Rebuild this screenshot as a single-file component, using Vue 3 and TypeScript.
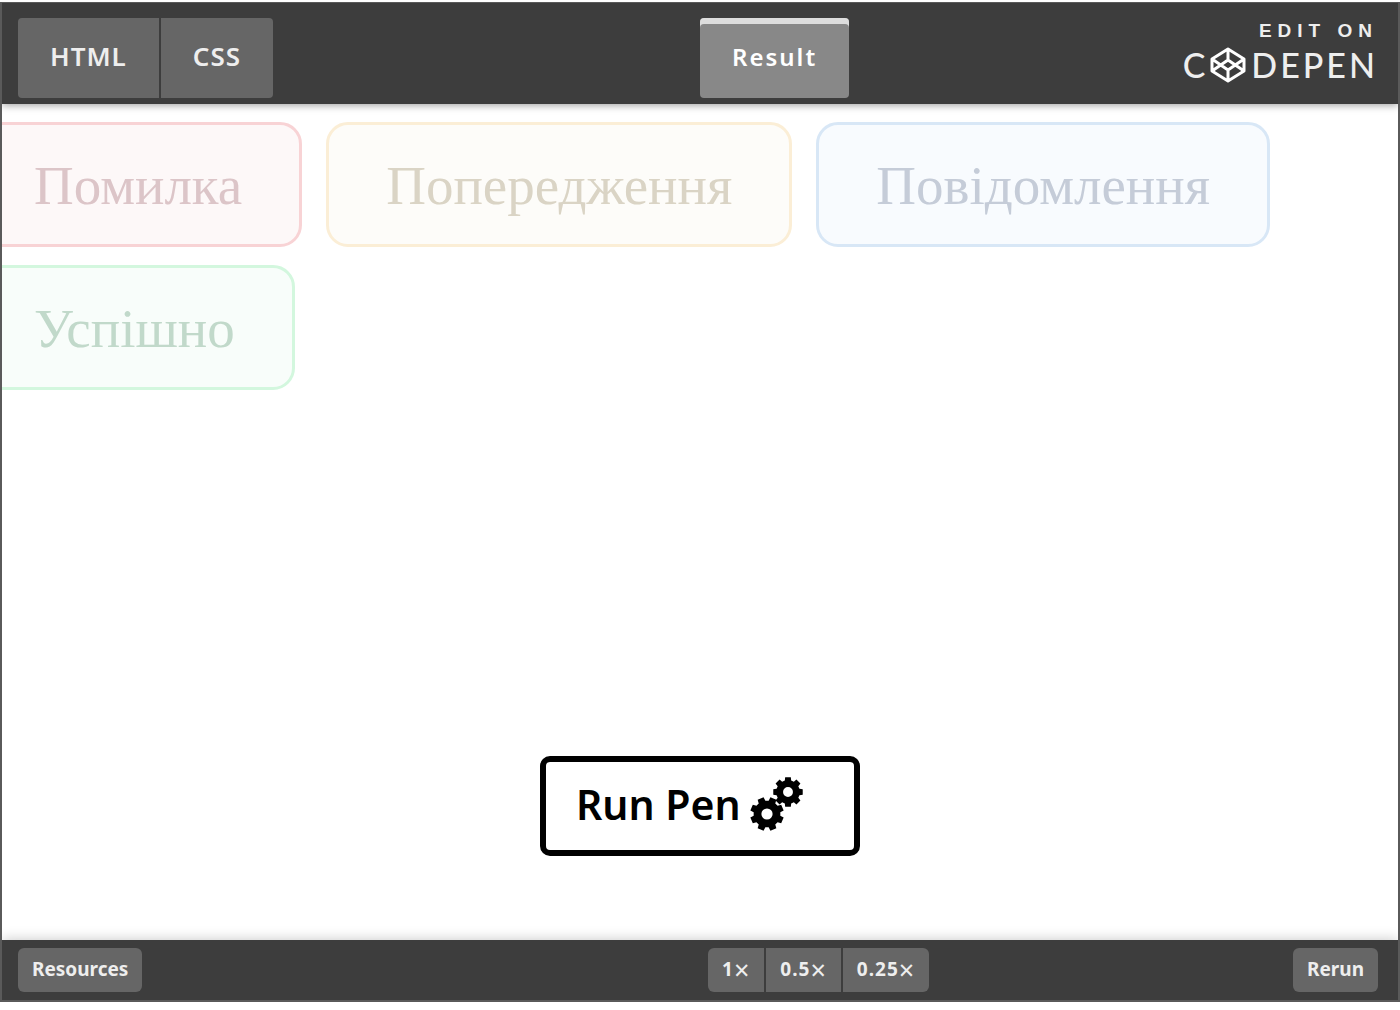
<script setup lang="ts">
interface Notice {
  kind: string
  text: string
}

const tabs: string[] = ['HTML', 'CSS']
const zooms: string[] = ['1', '0.5', '0.25']
const notices: Notice[] = [
  { kind: 'error', text: 'Помилка' },
  { kind: 'warning', text: 'Попередження' },
  { kind: 'info', text: 'Повідомлення' },
  { kind: 'success', text: 'Успішно' },
]

/* Outline of a gear with eight square teeth and a round hole. */
function gear(cx: number, cy: number, r: number, turn: number): string {
  const points: string[] = []
  for (let i = 0; i < 8; i++) {
    const base = turn + (i * Math.PI) / 4
    const steps: [number, number][] = [
      [-0.27, 0.79],
      [-0.19, 1],
      [0.19, 1],
      [0.27, 0.79],
    ]
    for (const [offset, reach] of steps) {
      const x = cx + Math.cos(base + offset) * r * reach
      const y = cy + Math.sin(base + offset) * r * reach
      points.push(`${x.toFixed(2)} ${y.toFixed(2)}`)
    }
  }
  const h = r * 0.33
  return `M${points.join('L')}ZM${cx - h} ${cy}a${h} ${h} 0 1 0 ${2 * h} 0a${h} ${h} 0 1 0 ${-2 * h} 0Z`
}

const gears = [gear(17, 38, 17, Math.PI / 8), gear(38, 16, 15, 0)]
</script>

<template>
  <div class="embed">
    <header class="bar top">
      <nav class="tabs">
        <button v-for="tab in tabs" :key="tab" type="button" class="tab">{{ tab }}</button>
      </nav>
      <div class="half">
        <button type="button" class="tab active">Result</button>
        <a class="brand" href="#" aria-label="Edit on CodePen">
          <span class="edit">EDIT ON</span>
          <span class="logo">
            <span>C</span>
            <svg class="mark" viewBox="0 0 36 36" aria-hidden="true">
              <path d="M18 2 34 12V24L18 34 2 24V12ZM18 2V12M18 24V34M2 12 18 23 34 12M2 24 18 13 34 24" />
            </svg>
            <span class="name">DEPEN</span>
          </span>
        </a>
      </div>
    </header>

    <main class="stage">
      <div class="notices">
        <div v-for="n in notices" :key="n.kind" class="notice" :class="n.kind">{{ n.text }}</div>
      </div>
      <button type="button" class="run">
        <span>Run Pen</span>
        <svg class="gears" viewBox="0 0 54 56" aria-hidden="true">
          <path v-for="g in gears" :key="g" :d="g" fill-rule="evenodd" />
        </svg>
      </button>
    </main>

    <footer class="bar bottom">
      <div><button type="button" class="small">Resources</button></div>
      <div class="half">
        <div class="zooms">
          <button v-for="z in zooms" :key="z" type="button" class="small">{{ z }}<span class="times">×</span></button>
        </div>
        <button type="button" class="small">Rerun</button>
      </div>
    </footer>
  </div>
</template>

<style>
body {
  margin: 0;
  background: #fff;
}
</style>

<style scoped>
.embed {
  box-sizing: border-box;
  display: flex;
  flex-direction: column;
  min-height: calc(100vh - 10px);
  margin: 2px 0 8px;
  border: 2px solid #5a5a5a;
  border-top-width: 1px;
  overflow: hidden;
  font-family: "Noto Sans", "Liberation Sans", sans-serif;
}
button {
  margin: 0;
  border: 0;
  font-family: inherit;
  cursor: pointer;
}
.bar {
  display: grid;
  grid-template-columns: 1fr 1fr;
  background: #3d3d3d;
  position: relative;
}
.top {
  padding: 15px 0 6px;
  box-shadow: 0 1px 8px rgba(0, 0, 0, 0.4);
}
.bottom {
  padding: 8px 0;
  box-shadow: 0 -1px 12px rgba(0, 0, 0, 0.2);
}
.bar > :first-child {
  padding-left: 16px;
}
.half {
  display: flex;
  justify-content: space-between;
  align-items: flex-start;
}
.tabs,
.zooms {
  display: flex;
  gap: 2px;
}
.tab {
  height: 80px;
  padding: 0 32px 4px;
  background: #666;
  color: #eee;
  font-size: 26px;
  font-weight: 600;
  letter-spacing: 1px;
}
.tabs .tab:first-child {
  border-radius: 4px 0 0 4px;
}
.tabs .tab:last-child {
  border-radius: 0 4px 4px 0;
}
.tab.active {
  background: #888;
  border-radius: 4px;
  box-shadow: inset 0 6px #ddd;
  color: #fff;
  font-size: 24px;
  letter-spacing: 2px;
}
.brand {
  display: flex;
  flex-direction: column;
  align-items: flex-end;
  padding-right: 20px;
  color: #eee;
  text-decoration: none;
}
.edit {
  font: 700 19px/26px "Liberation Sans", sans-serif;
  letter-spacing: 6px;
}
.logo {
  display: flex;
  align-items: center;
  font: 500 34px/42px Lato, sans-serif;
}
.mark {
  width: 38px;
  height: 36px;
  margin: 0 4px;
  fill: none;
  stroke: #fff;
  stroke-width: 3;
  stroke-linejoin: round;
}
.name {
  letter-spacing: 3px;
}
.stage {
  flex: 1;
  display: flex;
  flex-direction: column;
  justify-content: space-between;
  align-items: center;
  padding: 18px 0 84px;
}
.notices {
  align-self: stretch;
  display: flex;
  flex-wrap: wrap;
  gap: 18px 24px;
  margin-left: -28px;
}
.notice {
  box-sizing: border-box;
  padding: 29px 57px 27px;
  border: 3px solid;
  border-radius: 22px;
  font: 55px/63px "Liberation Serif", serif;
}
.error {
  border-color: #f8d3d5;
  background: #fdf8f8;
  color: #dcc5c8;
}
.warning {
  border-color: #fbeed6;
  background: #fdfcf9;
  color: #dad4c5;
}
.info {
  border-color: #d8e7f6;
  background: #f8fbfe;
  color: #c5ccd8;
}
.success {
  border-color: #d3f7de;
  background: #f8fdfa;
  color: #c1d9ca;
}
.run {
  display: flex;
  align-items: center;
  gap: 9px;
  width: 320px;
  height: 100px;
  padding: 0 0 4px 30px;
  border: 6px solid #000;
  border-radius: 10px;
  background: #fff;
  color: #000;
  font-size: 41px;
  font-weight: 600;
}
.gears {
  width: 54px;
  height: 56px;
}
.small {
  height: 44px;
  padding: 0 14px 2px;
  border-radius: 6px;
  background: #666;
  color: #eee;
  font-size: 19px;
  font-weight: 700;
  line-height: 28px;
}
.zooms {
  margin-left: 8px;
}
.zooms .small {
  border-radius: 0;
  letter-spacing: 1px;
}
.zooms .small:first-child {
  border-radius: 6px 0 0 6px;
}
.zooms .small:last-child {
  border-radius: 0 6px 6px 0;
}
.times {
  font-size: 27px;
  font-weight: 400;
  line-height: 20px;
  vertical-align: -4px;
}
.bottom .half {
  padding-right: 20px;
}
</style>
